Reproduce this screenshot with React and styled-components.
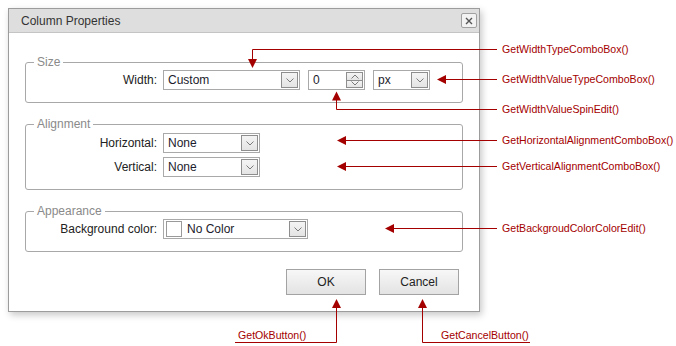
import React from 'react';
import styled, { createGlobalStyle } from 'styled-components';

const GlobalStyle = createGlobalStyle`
  body {
    margin: 0;
    background: #fff;
    font-family: 'Liberation Sans', Arial, sans-serif;
  }
`;

const RED = '#a40000';

const Canvas = styled.div`
  position: relative;
  width: 676px;
  height: 346px;
  padding: 8px;
  box-sizing: border-box;
  overflow: hidden;
`;

const Dialog = styled.div`
  width: 472px;
  height: 304px;
  box-sizing: border-box;
  border: 1px solid #9c9c9c;
  background: #fff;
  box-shadow: 2px 3px 7px rgba(0, 0, 0, 0.22);
  display: flex;
  flex-direction: column;
`;

const TitleBar = styled.div`
  height: 23px;
  flex: none;
  display: flex;
  align-items: center;
  justify-content: space-between;
  padding: 0 2px 0 12px;
  background: #dedede;
  border-bottom: 1px solid #c4c4c4;
  font-size: 12px;
  color: #333;
`;

const CloseButton = styled.div`
  width: 16px;
  height: 15px;
  box-sizing: border-box;
  border: 1px solid #a0a0a0;
  border-radius: 2px;
  background: #f2f2f2;
  display: flex;
  align-items: center;
  justify-content: center;
`;

const Body = styled.div`
  flex: 1;
  display: flex;
  flex-direction: column;
  gap: 14px;
  padding: 22px 16px 0 16px;
`;

const Group = styled.fieldset`
  margin: 0;
  padding: ${p => p.$pt || 0}px 12px 12px 0;
  min-width: 0;
  border: 1px solid #a8a8a8;
  border-radius: 3px;
  display: grid;
  grid-template-columns: 131px auto;
  column-gap: 6px;
  row-gap: 4px;
  align-items: center;
`;

const Legend = styled.legend`
  margin-left: 8px;
  padding: 0 3px;
  font-size: 12px;
  line-height: 15px;
  color: #8a8a8a;
`;

const Label = styled.div`
  text-align: right;
  font-size: 12px;
  color: #222;
`;

const Fields = styled.div`
  display: flex;
  gap: 8px;
`;

const Editor = styled.div`
  width: ${p => p.$w}px;
  height: 20px;
  box-sizing: border-box;
  border: 1px solid #a9a9a9;
  background: #fff;
  display: flex;
  align-items: stretch;
  padding: 1px;
`;

const EditorText = styled.div`
  flex: 1;
  display: flex;
  align-items: center;
  padding-left: 3px;
  font-size: 12px;
  color: #1c1c2c;
`;

const DropButton = styled.div`
  width: 17px;
  box-sizing: border-box;
  border: 1px solid #8e8e8e;
  background: linear-gradient(#f4f4f4, #e4e4e4);
  display: flex;
  align-items: center;
  justify-content: center;
`;

const SpinColumn = styled.div`
  width: 17px;
  display: flex;
  flex-direction: column;
`;

const SpinButton = styled.div`
  flex: 1;
  box-sizing: border-box;
  border: 1px solid #8e8e8e;
  border-top-width: ${p => (p.$down ? 0 : 1)}px;
  background: linear-gradient(#f4f4f4, #e4e4e4);
  display: flex;
  align-items: center;
  justify-content: center;
`;

const Swatch = styled.div`
  width: 16px;
  margin: 0 2px 0 1px;
  box-sizing: border-box;
  border: 1px solid #9a9a9a;
  background: #fff;
`;

const ButtonRow = styled.div`
  display: flex;
  justify-content: flex-end;
  gap: 13px;
  padding: 3px 4px 0 0;
`;

const Button = styled.div`
  width: 80px;
  height: 26px;
  box-sizing: border-box;
  border: 1px solid #a3a3a3;
  background: linear-gradient(#f7f7f7, #e3e3e3);
  display: flex;
  align-items: center;
  justify-content: center;
  font-size: 12px;
  color: #222;
`;

const Overlay = styled.svg`
  position: absolute;
  left: 0;
  top: 0;
  pointer-events: none;
`;

const Callout = styled.div`
  position: absolute;
  left: ${p => p.$x}px;
  top: ${p => p.$y - 7}px;
  line-height: 14px;
  font-size: 10.6px;
  color: ${RED};
  white-space: nowrap;
`;

const Chevron = ({ up }) => (
  <svg width="8" height="5" viewBox="0 0 8 5">
    <path d={up ? 'M0.5 4.5 L4 1 L7.5 4.5' : 'M0.5 0.5 L4 4 L7.5 0.5'} fill="none" stroke="#7a7a7a" strokeWidth="1" />
  </svg>
);

const Combo = ({ w, text, swatch }) => (
  <Editor $w={w}>
    {swatch && <Swatch />}
    <EditorText>{text}</EditorText>
    <DropButton><Chevron /></DropButton>
  </Editor>
);

const SpinEdit = ({ w, value }) => (
  <Editor $w={w}>
    <EditorText>{value}</EditorText>
    <SpinColumn>
      <SpinButton><Chevron up /></SpinButton>
      <SpinButton $down><Chevron /></SpinButton>
    </SpinColumn>
  </Editor>
);

const arrowHead = (x, y, dir) => {
  const pts = {
    down: `${x - 4.5},${y - 9} ${x + 4.5},${y - 9} ${x},${y}`,
    up: `${x - 4.5},${y + 9} ${x + 4.5},${y + 9} ${x},${y}`,
    left: `${x + 9},${y - 4.5} ${x + 9},${y + 4.5} ${x},${y}`,
  };
  return <polygon points={pts[dir]} fill={RED} />;
};

const callouts = [
  { y: 49, text: 'GetWidthTypeComboBox()' },
  { y: 79, text: 'GetWidthValueTypeComboBox()' },
  { y: 109, text: 'GetWidthValueSpinEdit()' },
  { y: 140, text: 'GetHorizontalAlignmentComboBox()' },
  { y: 166, text: 'GetVerticalAlignmentComboBox()' },
  { y: 228, text: 'GetBackgroudColorColorEdit()' },
];

function Annotations() {
  return (
    <>
      <Overlay width="676" height="346" viewBox="0 0 676 346">
        <g stroke={RED} strokeWidth="1" fill="none">
          <path d="M497 49.5 H252.5 V60" />
          <path d="M497 79.5 H445" />
          <path d="M497 109.5 H336.5 V100" />
          <path d="M497 140.5 H345" />
          <path d="M497 166.5 H345" />
          <path d="M497 228.5 H393" />
          <path d="M336.5 307 V342.5 H235" />
          <path d="M422.5 307 V342.5 H530" />
        </g>
        {arrowHead(252.5, 68, 'down')}
        {arrowHead(437, 79.5, 'left')}
        {arrowHead(336.5, 91.5, 'up')}
        {arrowHead(337, 140.5, 'left')}
        {arrowHead(337, 166.5, 'left')}
        {arrowHead(385, 228.5, 'left')}
        {arrowHead(336.5, 299, 'up')}
        {arrowHead(422.5, 299, 'up')}
      </Overlay>
      {callouts.map(c => (
        <Callout key={c.text} $x={502} $y={c.y}>{c.text}</Callout>
      ))}
      <Callout $x={238} $y={335}>GetOkButton()</Callout>
      <Callout $x={441} $y={335}>GetCancelButton()</Callout>
    </>
  );
}

export default function App() {
  return (
    <>
      <GlobalStyle />
      <Canvas>
        <Dialog>
          <TitleBar>
            Column Properties
            <CloseButton>
              <svg width="8" height="8" viewBox="0 0 8 8">
                <path d="M1 1 L7 7 M7 1 L1 7" stroke="#555" strokeWidth="1.4" />
              </svg>
            </CloseButton>
          </TitleBar>
          <Body>
            <Group>
              <Legend>Size</Legend>
              <Label>Width:</Label>
              <Fields>
                <Combo w={137} text="Custom" />
                <SpinEdit w={57} value="0" />
                <Combo w={57} text="px" />
              </Fields>
            </Group>
            <Group $pt={1}>
              <Legend>Alignment</Legend>
              <Label>Horizontal:</Label>
              <Combo w={97} text="None" />
              <Label>Vertical:</Label>
              <Combo w={97} text="None" />
            </Group>
            <Group>
              <Legend>Appearance</Legend>
              <Label>Background color:</Label>
              <Combo w={145} text="No Color" swatch />
            </Group>
            <ButtonRow>
              <Button>OK</Button>
              <Button>Cancel</Button>
            </ButtonRow>
          </Body>
        </Dialog>
        <Annotations />
      </Canvas>
    </>
  );
}
